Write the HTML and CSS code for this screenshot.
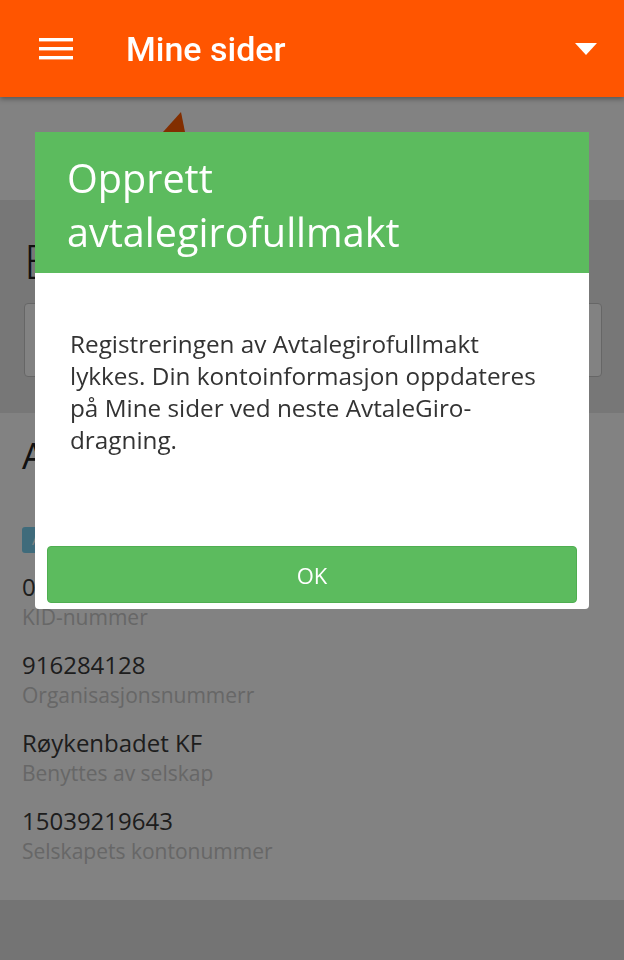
FILE: index.html
```html
<!DOCTYPE html>
<html lang="no">
<head>
<meta charset="utf-8">
<title>Mine sider</title>
<link rel="stylesheet" href="styles.css">
</head>
<body>
<header class="topbar">
  <button class="menu-btn" aria-label="Meny">
    <svg width="34" height="22" viewBox="0 0 34 22"><rect x="0" y="0" width="34" height="3.4" fill="#fff"/><rect x="0" y="9" width="34" height="3.4" fill="#fff"/><rect x="0" y="18" width="34" height="3.4" fill="#fff"/></svg>
  </button>
  <h1 class="title">Mine sider</h1>
  <svg class="drop" width="22" height="12" viewBox="0 0 22 12"><path d="M0 0 H22 L11 12 Z" fill="#fff"/></svg>
</header>

<main class="page">
  <section class="intro">
    <svg class="pointer" width="26" height="20" viewBox="0 0 26 20"><path d="M18 0 L22 20 L0 20 Z" fill="#ff5a00"/></svg>
  </section>

  <section class="edit">
    <h2 class="edit-title">Endre</h2>
    <div class="select-box"></div>
  </section>

  <section class="details">
    <h2 class="details-title">Avtale</h2>
    <span class="badge">Aktiv</span>
    <dl class="facts">
      <div class="fact"><dt>0012345678</dt><dd>KID-nummer</dd></div>
      <div class="fact"><dt>916284128</dt><dd>Organisasjonsnummerr</dd></div>
      <div class="fact"><dt>Røykenbadet KF</dt><dd>Benyttes av selskap</dd></div>
      <div class="fact"><dt>15039219643</dt><dd>Selskapets kontonummer</dd></div>
    </dl>
  </section>

  <footer class="foot"></footer>
</main>

<div class="backdrop">
  <div class="modal" role="dialog">
    <div class="modal-head">
      <h3 class="modal-title">Opprett avtalegirofullmakt</h3>
    </div>
    <div class="modal-body">
      <p>Registreringen av Avtalegirofullmakt lykkes. Din kontoinformasjon oppdateres på Mine sider ved neste AvtaleGiro-dragning.</p>
    </div>
    <div class="modal-foot">
      <button class="ok-btn">OK</button>
    </div>
  </div>
</div>
</body>
</html>
```

FILE: styles.css
```css
* { box-sizing: border-box; }
html, body {
  margin: 0;
  padding: 0;
}
body {
  width: 624px;
  height: 960px;
  overflow: hidden;
  font-family: "Open Sans", "Liberation Sans", sans-serif;
  background: #ffffff;
  color: #333;
}

.topbar {
  position: relative;
  z-index: 2;
  height: 97px;
  background: #ff5500;
  display: flex;
  align-items: center;
  padding: 0 27px 0 39px;
  box-shadow: 0 2px 5px rgba(0,0,0,0.35);
}
.menu-btn {
  border: 0;
  background: none;
  padding: 0;
  margin: 0;
  width: 34px;
  height: 22px;
  display: flex;
}
.title {
  flex: 1;
  margin: 0 0 0 53px;
  font-family: Roboto, "Noto Sans", sans-serif;
  font-weight: 500;
  font-size: 34px;
  color: #fff;
}
.drop { display: block; }

.page { display: flex; flex-direction: column; }

.intro {
  position: relative;
  height: 103px;
  background: #ffffff;
}
.pointer {
  position: absolute;
  left: 163px;
  top: 15px;
}

.edit {
  background: #e9e9e9;
  padding: 33px 22px 36px 24px;
}
.edit-title {
  margin: 0;
  font-weight: 300;
  font-size: 47px;
  line-height: 56px;
  color: #222;
}
.select-box {
  margin-top: 14px;
  height: 74px;
  background: #fff;
  border: 1px solid #c8c8c8;
  border-radius: 4px;
}

.details {
  background: #ffffff;
  padding: 21px 22px 34px 22px;
  display: flex;
  flex-direction: column;
  align-items: flex-start;
}
.details-title {
  margin: 0;
  font-size: 36px;
  font-weight: 400;
  line-height: 44px;
  color: #222;
}
.badge {
  margin-top: 49px;
  height: 26px;
  padding: 0 10px;
  background: #7cd3f2;
  color: #fff;
  border-radius: 3px;
  font-size: 14px;
  line-height: 26px;
}
.facts {
  margin: 19px 0 0 0;
  display: flex;
  flex-direction: column;
  gap: 18px;
}
.fact dt {
  font-size: 24px;
  line-height: 30px;
  color: #3a3a3a;
}
.fact dd {
  margin: 0;
  font-size: 21px;
  line-height: 30px;
  color: #cacaca;
}

.foot {
  height: 60px;
  background: #e4e4e4;
}

.backdrop {
  position: fixed;
  inset: 0;
  z-index: 1;
  background: rgba(0,0,0,0.49);
  display: flex;
  justify-content: center;
  align-items: flex-start;
  padding-top: 132px;
}
.modal {
  width: 554px;
  background: #fff;
  border-radius: 0 0 4px 4px;
  overflow: hidden;
}
.modal-head {
  background: #5cbb5e;
  height: 141px;
  padding: 19px 80px 0 32px;
}
.modal-title {
  margin: 0;
  font-weight: 400;
  font-size: 39.6px;
  line-height: 54px;
  color: #fff;
}
.modal-body {
  padding: 55px 35px 0 35px;
  height: 273px;
}
.modal-body p {
  margin: 0;
  font-size: 24.3px;
  line-height: 32px;
  color: #333;
}
.modal-foot {
  padding: 0 12px 6px 12px;
}
.ok-btn {
  display: block;
  width: 100%;
  height: 57px;
  background: #5cbb5e;
  border: 1px solid #4fae51;
  border-radius: 4px;
  color: #fff;
  font-family: "Open Sans", "Liberation Sans", sans-serif;
  font-size: 22px;
  padding: 0;
}
```
